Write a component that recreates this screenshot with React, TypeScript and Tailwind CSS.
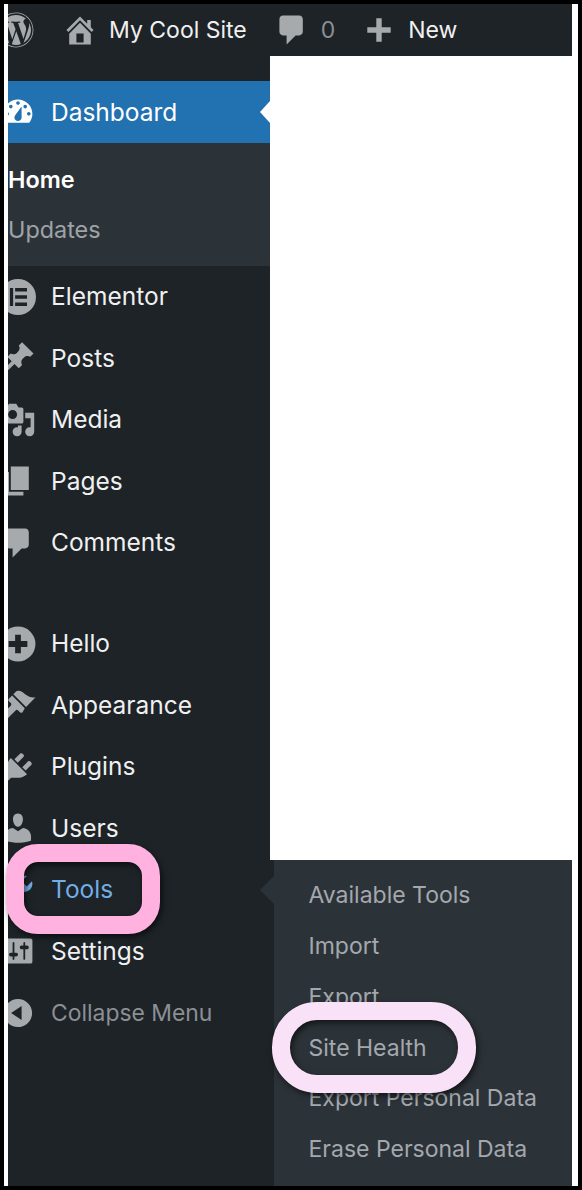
import { FaWordpress } from "react-icons/fa";

const ICONS: Record<string, string> = {
  home: "M16 8.5l1.53 1.53-1.06 1.06L10 4.62l-6.47 6.47-1.06-1.06L10 2.5l4 4v-2h2v4zm-6-2.46l6 5.99V18H4v-5.97zM12 17v-5H8v5h4z",
  bubble: "M5 2h9c1.1 0 2 .9 2 2v7c0 1.1-.9 2-2 2h-2l-5 5v-5H5c-1.1 0-2-.9-2-2V4c0-1.1.9-2 2-2z",
  plus: "M16.5 8.5v3h-5v5h-3v-5h-5v-3h5v-5h3v5h5z",
  dashboard: "M3.76 16h12.48c1.1-1.37 1.76-3.11 1.76-5 0-4.42-3.58-8-8-8s-8 3.58-8 8c0 1.89.66 3.63 1.76 5zM10 4c.55 0 1 .45 1 1s-.45 1-1 1-1-.45-1-1 .45-1 1-1zM6 6c.55 0 1 .45 1 1s-.45 1-1 1-1-.45-1-1 .45-1 1-1zm8 0c.55 0 1 .45 1 1s-.45 1-1 1-1-.45-1-1 .45-1 1-1zm-5.37 5.55L12 7v6c0 1.1-.9 2-2 2s-2-.9-2-2c0-.57.24-1.08.63-1.45zM4 10c.55 0 1 .45 1 1s-.45 1-1 1-1-.45-1-1 .45-1 1-1zm12 0c.55 0 1 .45 1 1s-.45 1-1 1-1-.45-1-1 .45-1 1-1z",
  elementor: "M10 0a10 10 0 1 0 0 20 10 10 0 0 0 0-20zM5.5 5h1.8v10H5.5zM8.4 5h6.6v1.9H8.4zM8.4 9.05h6.6v1.9H8.4zM8.4 13.1h6.6V15H8.4z",
  posts: "M10.44 3.02l1.82-1.82 6.36 6.35-1.83 1.82c-1.05-.68-2.48-.57-3.41.36l-.75.75c-.92.93-1.04 2.35-.35 3.41l-1.83 1.82-2.41-2.41-2.8 2.79c-.42.42-3.38 2.71-3.8 2.29s1.86-3.39 2.28-3.81l2.79-2.79L4.1 9.36l1.83-1.82c1.05.69 2.48.57 3.4-.36l.75-.75c.93-.92 1.05-2.35.36-3.41z",
  media: "M13 11V4c0-.55-.45-1-1-1h-1.67L9 1H5L3.67 3H2c-.55 0-1 .45-1 1v7c0 .55.45 1 1 1h10c.55 0 1-.45 1-1zM7 4.5c1.38 0 2.5 1.12 2.5 2.5S8.38 9.5 7 9.5 4.5 8.38 4.5 7 5.62 4.5 7 4.5zM14 6h5v10.5c0 1.38-1.12 2.5-2.5 2.5S14 17.88 14 16.5s1.12-2.5 2.5-2.5c.17 0 .34.02.5.05V9h-3V6zm-4 8.05V13h2v3.5c0 1.38-1.12 2.5-2.5 2.5S7 17.88 7 16.5 8.12 14 9.5 14c.17 0 .34.02.5.05z",
  pages: "M6 15V2h10v13H6zm-1 1h8v2H3V5h2v11z",
  comments: "M5 2h9c1.1 0 2 .9 2 2v7c0 1.1-.9 2-2 2h-2l-5 5v-5H5c-1.1 0-2-.9-2-2V4c0-1.1.9-2 2-2z",
  hello: "M10 .3a9.7 9.7 0 1 0 0 19.4A9.7 9.7 0 0 0 10 .3zM8.4 4.8h3.2v3.6h3.6v3.2h-3.6v3.6H8.4v-3.6H4.8V8.4h3.6z",
  appearance: "M14.48 11.06L7.41 3.99l1.5-1.5c.5-.56 2.3-.47 3.51.32 1.21.8 1.43 1.28 2.91 2.1 1.18.64 2.45 1.26 4.45.85zm-.71.71L6.7 4.7 4.93 6.47c-.39.39-.39 1.02 0 1.41l1.06 1.06c.39.39.39 1.03 0 1.42-.6.6-6.4 6.23-6.4 6.23l2.82 2.83s5.59-5.86 6.23-6.42c.39-.39 1.03-.39 1.42 0l1.06 1.06c.39.39 1.02.39 1.41 0z",
  plugins: "M13.11 4.36L9.87 7.6 8 5.73l3.24-3.24c.35-.34 1.05-.2 1.56.32.52.51.66 1.21.31 1.55zm-8 1.77l.91-1.12 9.01 9.01-1.19.84c-.71.71-2.63 1.16-3.82 1.16H6.14L4.9 17.26c-.59.59-1.54.59-2.12 0-.59-.58-.59-1.53 0-2.12l1.24-1.24v-3.88c0-1.13.4-3.19 1.09-3.89zm7.26 3.97l3.24-3.24c.34-.35 1.04-.21 1.55.31.52.51.66 1.21.31 1.55l-3.24 3.25z",
  users: "M10 9.25c-2.27 0-2.73-3.44-2.73-3.44C7 4.02 7.82 2 9.97 2c2.16 0 2.98 2.02 2.71 3.81 0 0-.41 3.44-2.68 3.44zm0 2.57L12.72 10c2.39 0 4.52 2.33 4.52 4.53v2.49s-3.65 1.13-7.24 1.13c-3.65 0-7.24-1.13-7.24-1.13v-2.49c0-2.25 1.94-4.48 4.47-4.48z",
  tools: "M16.68 9.77c-1.34 1.34-3.3 1.67-4.95.99l-5.41 6.52c-.99.99-2.59.99-3.58 0s-.99-2.59 0-3.57l6.52-5.42c-.68-1.65-.35-3.61.99-4.95 1.28-1.28 3.12-1.62 4.72-1.06l-2.89 2.89 2.82 2.82 2.86-2.87c.53 1.58.18 3.39-1.08 4.65z",
  settings: "M18 16V4c0-.55-.45-1-1-1H3c-.55 0-1 .45-1 1v12c0 .55.45 1 1 1h14c.55 0 1-.45 1-1zM8 11h1c.55 0 1 .45 1 1s-.45 1-1 1H8v1.5c0 .28-.22.5-.5.5s-.5-.22-.5-.5V13H6c-.55 0-1-.45-1-1s.45-1 1-1h1V5.5c0-.28.22-.5.5-.5s.5.22.5.5V11zm5-2h-1c-.55 0-1-.45-1-1s.45-1 1-1h1V5.5c0-.28.22-.5.5-.5s.5.22.5.5V7h1c.55 0 1 .45 1 1s-.45 1-1 1h-1v5.5c0 .28-.22.5-.5.5s-.5-.22-.5-.5V9z",
  collapse: "M10 2.16c4.33 0 7.84 3.51 7.84 7.84s-3.51 7.84-7.84 7.84S2.16 14.33 2.16 10 5.67 2.16 10 2.16zm2 11.72V6.12L6.18 9.97z",
};

const Icon = ({ name, className }: { name: string; className: string }) => (
  <svg viewBox="0 0 20 20" className={className} fill="currentColor" fillRule="evenodd">
    <path d={ICONS[name]} />
  </svg>
);

const MenuItem = ({ icon, label }: { icon: string; label: string }) => (
  <div className="h-[61.5px] flex items-center text-[#f0f0f1]">
    <Icon name={icon} className="w-9 h-9 -ml-[8px] shrink-0 text-[#a7aaad]" />
    <span className="ml-[15px]">{label}</span>
  </div>
);

const flyout = ["Available Tools", "Import", "Export", "Site Health", "Export Personal Data", "Erase Personal Data"];

export default function App() {
  return (
    <div className="relative w-[582px] h-[1190px] bg-black p-[4px] overflow-hidden font-['Inter',sans-serif] text-[24.5px]">
      <div className="h-full bg-white pl-[4px] pr-[6px] flex flex-col">
        {/* Admin bar */}
        <header className="h-[52px] shrink-0 bg-[#1d2327] flex items-center overflow-hidden text-[#f0f0f1] text-[23px]">
          <FaWordpress className="w-9 h-9 -ml-[10px] shrink-0 text-[#a7aaad]" />
          <Icon name="home" className="w-9 h-9 ml-[28px] shrink-0 text-[#a7aaad]" />
          <span className="ml-[11px] pt-[1px]">My Cool Site</span>
          <Icon name="bubble" className="w-9 h-9 ml-[27px] shrink-0 text-[#a7aaad]" />
          <span className="ml-[11px] pt-[1px] text-[#8c8f94]">0</span>
          <Icon name="plus" className="w-9 h-9 ml-[26px] shrink-0 text-[#a7aaad]" />
          <span className="ml-[11px] pt-[1px]">New</span>
        </header>

        <div className="flex-1 flex min-h-0">
          {/* Sidebar */}
          <aside className="w-[262px] shrink-0 bg-[#1d2327] pt-[25px] overflow-hidden">
            <div className="relative h-[62px] bg-[#2271b1] text-white flex items-center">
              <Icon name="dashboard" className="w-9 h-9 -ml-[8px] shrink-0" />
              <span className="ml-[15px]">Dashboard</span>
              <div className="absolute right-0 top-[20px] border-y-[11px] border-r-[10px] border-y-transparent border-r-white" />
            </div>
            <div className="h-[123px] bg-[#2c3338] pt-[12px] text-[23.4px]">
              <div className="h-[50px] flex items-center font-semibold text-white">Home</div>
              <div className="h-[50px] flex items-center text-[#9ea3a8]">Updates</div>
            </div>
            <MenuItem icon="elementor" label="Elementor" />
            <MenuItem icon="posts" label="Posts" />
            <MenuItem icon="media" label="Media" />
            <MenuItem icon="pages" label="Pages" />
            <MenuItem icon="comments" label="Comments" />
            <div className="h-[39.5px]" />
            <MenuItem icon="hello" label="Hello" />
            <MenuItem icon="appearance" label="Appearance" />
            <MenuItem icon="plugins" label="Plugins" />
            <MenuItem icon="users" label="Users" />
            <div className="h-[61.5px] flex items-center text-[#72aee6]">
              <Icon name="tools" className="w-9 h-9 -ml-[8px] shrink-0" />
              <span className="ml-[15px]">Tools</span>
            </div>
            <MenuItem icon="settings" label="Settings" />
            <div className="h-[61.5px] flex items-center text-[#8c8f94] text-[22.9px]">
              <Icon name="collapse" className="w-9 h-9 -ml-[8px] shrink-0 text-[#a7aaad]" />
              <span className="ml-[15px]">Collapse Menu</span>
            </div>
          </aside>

          {/* Page area with the Tools flyout */}
          <div className="flex-1 flex flex-col min-w-0">
            <div className="h-[804px] shrink-0" />
            <div className="relative flex-1 bg-[#1d2327] pl-[4px]">
              <div className="absolute -left-[10px] top-[16px] w-0 h-0 border-y-[14px] border-r-[14px] border-y-transparent border-r-[#2c3338]" />
              <div className="h-full bg-[#2c3338] pl-[34.5px] pt-[10px] text-[23px] text-[#a4a8ae]">
                {flyout.map((item) => (
                  <div key={item} className="h-[50.8px] flex items-center whitespace-nowrap">{item}</div>
                ))}
              </div>
            </div>
          </div>
        </div>
      </div>

      {/* Highlight rings drawn over the screenshot */}
      <div className="absolute left-[6px] top-[844px] w-[154px] h-[90px] rounded-[32px] border-[18px] border-[#ffb1e0] shadow-[2px_3px_6px_rgba(0,0,0,0.6),inset_2px_3px_6px_rgba(0,0,0,0.6)]" />
      <div className="absolute left-[272px] top-[1002px] w-[204px] h-[91px] rounded-[45px] border-[18px] border-[#f9e2f8] shadow-[2px_3px_6px_rgba(0,0,0,0.6),inset_2px_3px_6px_rgba(0,0,0,0.6)]" />
    </div>
  );
}
